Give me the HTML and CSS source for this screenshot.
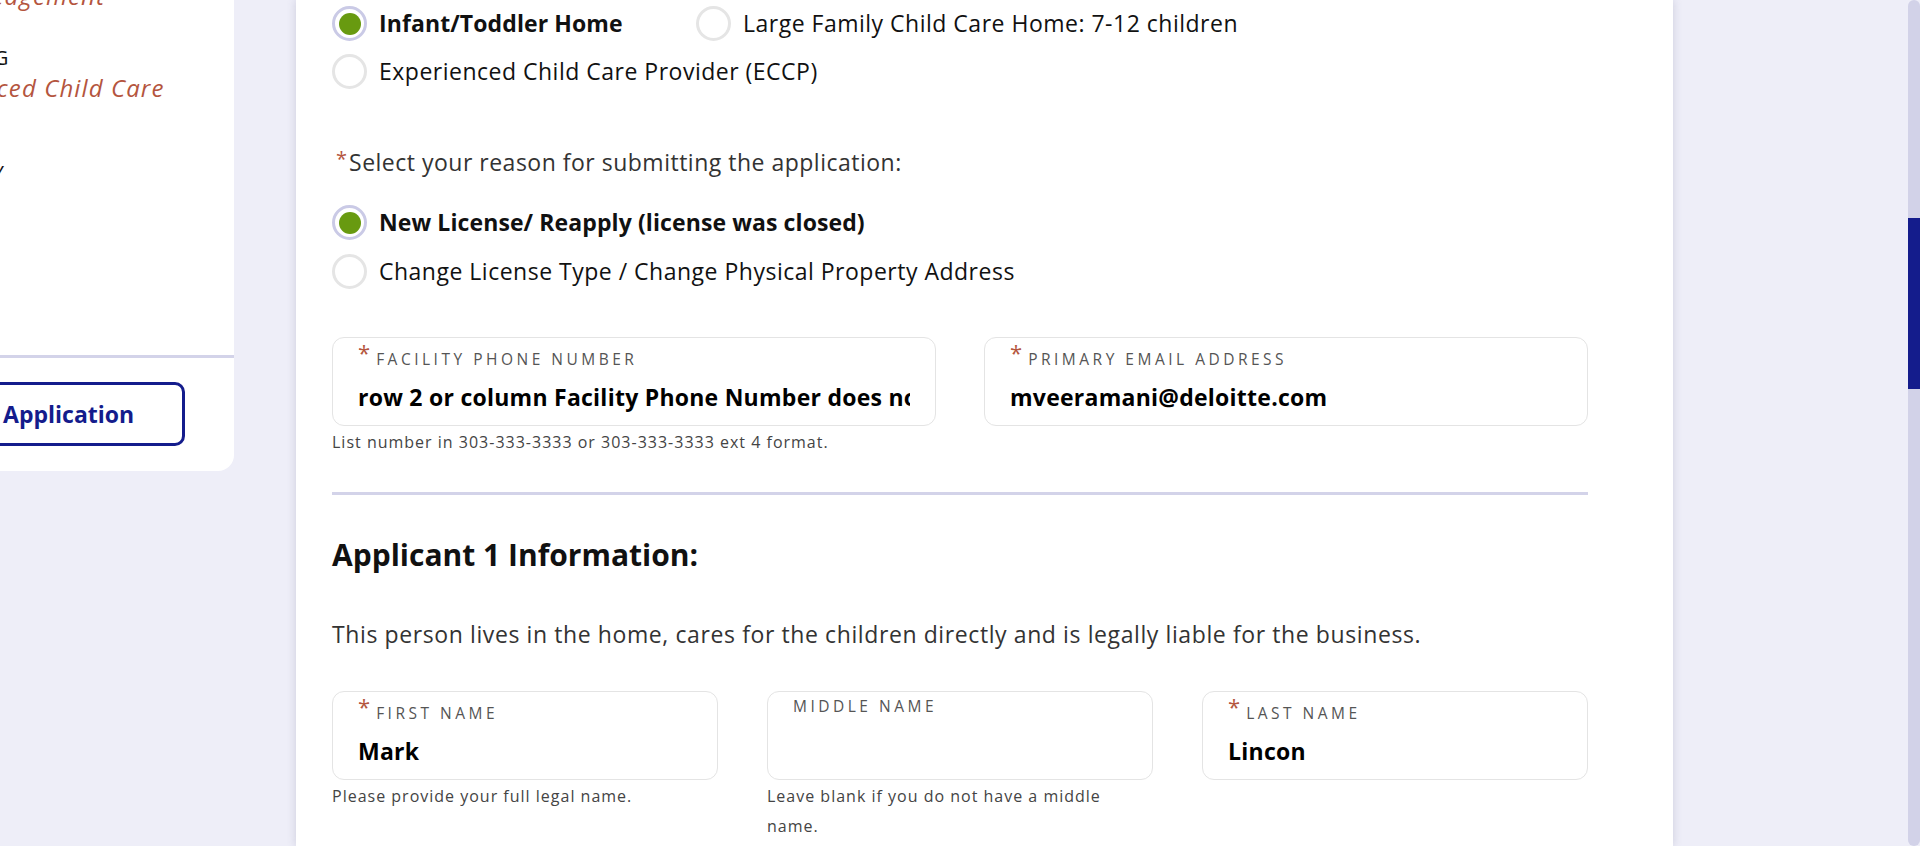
FILE: index.html
```html
<!DOCTYPE html>
<html lang="en">
<head>
<meta charset="utf-8">
<title>Child Care License Application</title>
<link rel="stylesheet" href="styles.css">
</head>
<body>
<div class="page">
  <aside class="sidebar">
    <div class="steps">
      <div class="step step-1">
        <div class="step-sub">Acknowledgement</div>
      </div>
      <div class="step step-2">
        <div class="step-title">LICENSING</div>
        <div class="step-sub">Experienced Child Care</div>
      </div>
      <div class="step step-3">
        <div class="step-title">PROPERTY</div>
      </div>
    </div>
    <div class="side-footer">
      <button class="btn-outline" type="button">Save Application</button>
    </div>
  </aside>

  <main class="panel">
    <div class="panel-inner">
      <div class="radio-grid">
        <label class="option checked"><span class="radio checked"></span>Infant/Toddler Home</label>
        <label class="option"><span class="radio"></span>Large Family Child Care Home: 7-12 children</label>
        <label class="option"><span class="radio"></span>Experienced Child Care Provider (ECCP)</label>
      </div>

      <p class="question"><span class="req">*</span>Select your reason for submitting the application:</p>

      <div class="radio-list">
        <label class="option checked"><span class="radio checked"></span>New License/ Reapply (license was closed)</label>
        <label class="option"><span class="radio"></span>Change License Type / Change Physical Property Address</label>
      </div>

      <div class="grid-2">
        <div class="field">
          <div class="field-box">
            <div class="field-label"><span class="req">*</span><span class="txt">Facility Phone Number</span></div>
            <input class="field-input" type="text" value="row 2 or column Facility Phone Number does not exist">
          </div>
          <div class="hint">List number in 303-333-3333 or 303-333-3333 ext 4 format.</div>
        </div>
        <div class="field">
          <div class="field-box">
            <div class="field-label"><span class="req">*</span><span class="txt">Primary Email Address</span></div>
            <input class="field-input" type="text" value="mveeramani@deloitte.com">
          </div>
        </div>
      </div>

      <div class="divider"></div>

      <h2 class="section-title">Applicant 1 Information:</h2>
      <p class="intro">This person lives in the home, cares for the children directly and is legally liable for the business.</p>

      <div class="grid-3">
        <div class="field">
          <div class="field-box">
            <div class="field-label"><span class="req">*</span><span class="txt">First Name</span></div>
            <input class="field-input" type="text" value="Mark">
          </div>
          <div class="hint narrow">Please provide your full legal name.</div>
        </div>
        <div class="field">
          <div class="field-box">
            <div class="field-label"><span class="txt">Middle Name</span></div>
            <input class="field-input" type="text" value="">
          </div>
          <div class="hint narrow">Leave blank if you do not have a middle name.</div>
        </div>
        <div class="field">
          <div class="field-box">
            <div class="field-label"><span class="req">*</span><span class="txt">Last Name</span></div>
            <input class="field-input" type="text" value="Lincon">
          </div>
        </div>
      </div>
    </div>
  </main>

  <div class="scrollbar"><div class="thumb"></div></div>
</div>
</body>
</html>
```

FILE: styles.css
```css
html, body {
  margin: 0;
  padding: 0;
  height: 100%;
}

body {
  background: #eeeef8;
  font-family: "Open Sans", "Noto Sans", sans-serif;
  color: #111;
  overflow: hidden;
}

.page {
  display: flex;
  height: 846px;
  overflow: hidden;
}

/* ---------- Sidebar ---------- */
.sidebar {
  flex: none;
  width: 364px;
  margin-left: -130px;
  align-self: flex-start;
  height: 471px;
  background: #fff;
  border-bottom-right-radius: 16px;
  display: flex;
  flex-direction: column;
}

.steps {
  height: 355px;
  box-sizing: border-box;
  padding-left: 27px;
}

.step-title {
  font-size: 20.5px;
  line-height: 30px;
  letter-spacing: 1px;
  white-space: nowrap;
  color: #111;
}

.step-sub {
  font-style: italic;
  font-size: 24px;
  line-height: 32px;
  letter-spacing: 1.1px;
  color: #b4553e;
  white-space: nowrap;
}

.step-1 { margin-top: -20px; }
.step-2 { margin-top: 30px; }
.step-3 { margin-top: 53px; }

.side-footer {
  border-top: 3px solid #d3d3e9;
  padding: 24px 0 0 23px;
}

.btn-outline {
  width: 292px;
  height: 64px;
  border: 3px solid #141c8c;
  border-radius: 10px;
  background: #fff;
  color: #141c8c;
  font-family: "Open Sans", sans-serif;
  font-weight: 700;
  font-size: 23px;
  white-space: nowrap;
  padding: 0;
}

/* ---------- Main panel ---------- */
.panel {
  flex: none;
  width: 1377px;
  margin-left: 62px;
  background: #fff;
  box-shadow: 0 0 9px rgba(70, 70, 110, 0.2);
}

.panel-inner {
  width: 1256px;
  padding: 6px 0 0 36px;
}

.radio-grid {
  display: grid;
  grid-template-columns: 364px auto;
  row-gap: 13px;
}

.radio-list {
  display: flex;
  flex-direction: column;
  gap: 14px;
  margin-top: 28px;
}

.option {
  display: flex;
  align-items: center;
  gap: 12px;
  height: 35px;
  font-size: 23px;
  letter-spacing: 0.5px;
  line-height: 35px;
  white-space: nowrap;
  color: #111;
}

.option.checked {
  font-weight: 700;
  letter-spacing: 0.1px;
}

.radio {
  flex: none;
  width: 35px;
  height: 35px;
  box-sizing: border-box;
  border: 3px solid #e5e5e5;
  border-radius: 50%;
  display: flex;
  align-items: center;
  justify-content: center;
}

.radio.checked {
  border-color: #cacae6;
}

.radio.checked::after {
  content: "";
  width: 22px;
  height: 22px;
  border-radius: 50%;
  background: #689a10;
}

.question {
  margin: 55px 0 0;
  padding-left: 4px;
  font-size: 23px;
  letter-spacing: 0.5px;
  line-height: 30px;
  color: #333;
}

.question .req {
  font-size: 20px;
  color: #b4553e;
  vertical-align: 5px;
  margin-right: 2px;
  letter-spacing: 0;
}

/* ---------- Fields ---------- */
.grid-2 {
  display: grid;
  grid-template-columns: 604px 604px;
  column-gap: 48px;
  margin-top: 48px;
}

.grid-3 {
  display: grid;
  grid-template-columns: 386px 386px 386px;
  column-gap: 49px;
  margin-top: 42px;
}

.field-box {
  height: 89px;
  box-sizing: border-box;
  border: 1px solid #e4e4e4;
  border-radius: 12px;
  padding: 3px 25px 0;
}

.field-label {
  display: flex;
  align-items: flex-start;
  height: 30px;
  font-size: 15.5px;
  letter-spacing: 3.5px;
  color: #555;
  text-transform: uppercase;
  white-space: nowrap;
}

.field-label .req {
  font-size: 22px;
  line-height: 1;
  color: #b4553e;
  letter-spacing: 0;
  margin-right: 6px;
}

.field-label .txt {
  line-height: 20px;
  margin-top: 1px;
}

.field-label .req + .txt {
  margin-top: 8px;
}

.field-input {
  display: block;
  width: 100%;
  height: 30px;
  margin: 11px 0 0;
  padding: 0;
  border: 0;
  outline: none;
  background: transparent;
  font-family: "Open Sans", sans-serif;
  font-weight: 700;
  font-size: 23px;
  letter-spacing: 0.25px;
  line-height: 30px;
  color: #000;
}

.hint {
  margin-top: 1px;
  font-size: 16px;
  letter-spacing: 1px;
  line-height: 30px;
  color: #444;
}

.hint.narrow {
  max-width: 360px;
}

.divider {
  height: 3px;
  background: #d3d3e9;
  margin-top: 35px;
}

.section-title {
  margin: 40px 0 0;
  font-size: 30px;
  line-height: 40px;
  font-weight: 700;
  color: #111;
}

.intro {
  margin: 44px 0 0;
  font-size: 23px;
  letter-spacing: 0.6px;
  line-height: 30px;
  color: #333;
}

/* ---------- Scrollbar ---------- */
.scrollbar {
  flex: none;
  width: 12px;
  height: 846px;
  margin-left: auto;
  background: #d2d2e8;
  border-radius: 6px;
}

.thumb {
  margin-top: 218px;
  height: 171px;
  background: #141c8c;
}
```
